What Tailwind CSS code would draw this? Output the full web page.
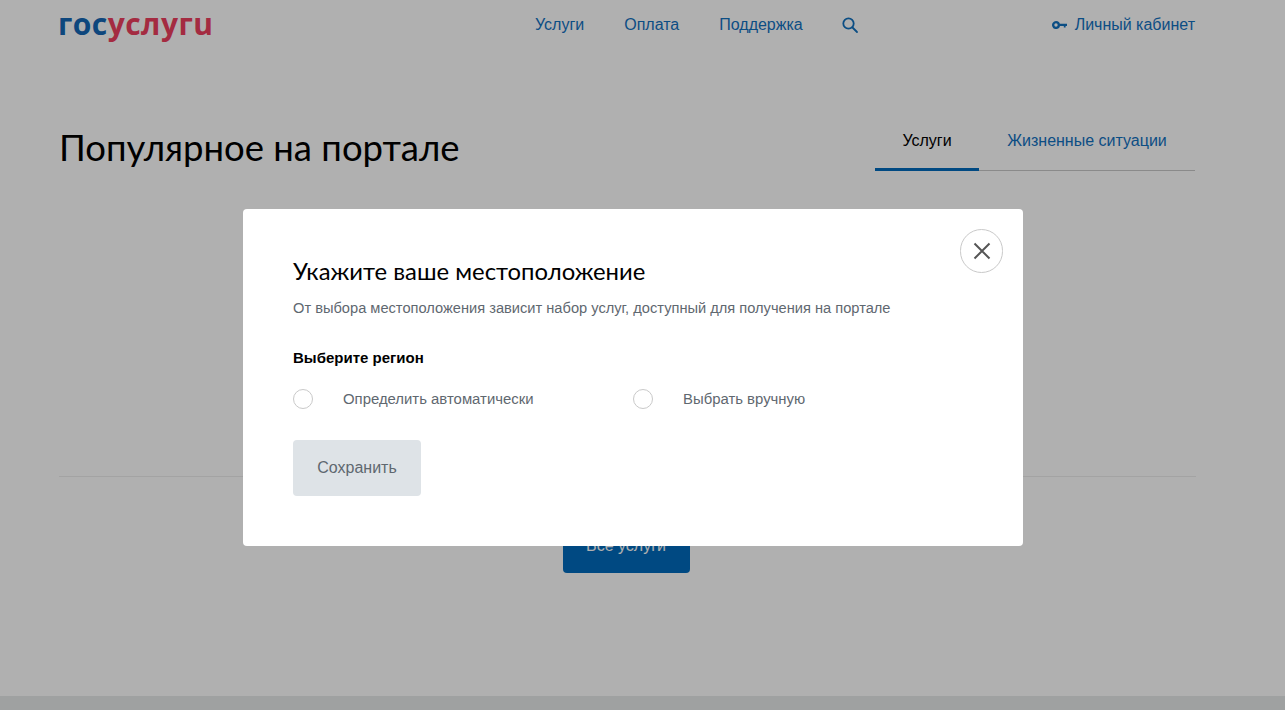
<!DOCTYPE html>
<html lang="ru">
<head>
  <meta charset="UTF-8" />
  <title>Госуслуги</title>
  <script src="https://cdn.jsdelivr.net/npm/@tailwindcss/browser@4"></script>
</head>
<body class="relative h-[710px] overflow-hidden bg-white font-['Liberation_Sans',sans-serif]">

  <!-- Шапка -->
  <header class="flex h-[50px] items-center pr-[90px] pl-[58px]">
    <a aria-label="госуслуги" class="-mt-[3px] w-[154px] font-['Open_Sans',sans-serif] text-[30px] leading-none font-bold tracking-[0.45px] whitespace-nowrap"><span class="text-[#1568b5]">гос</span><span class="text-[#ee3f5f]">услугu</span></a>
    <nav class="ml-[323px] flex items-center gap-10 text-base text-[#1271bf]">
      <a>Услуги</a>
      <a>Оплата</a>
      <a>Поддержка</a>
      <svg class="-ml-0.5 h-[18px] w-[18px]" viewBox="0 0 18 18" fill="none" stroke="currentColor" stroke-width="1.8"><circle cx="7.5" cy="7.5" r="5.2"/><path d="M11.5 11.5 16 16" stroke-linecap="round"/></svg>
    </nav>
    <a class="ml-auto flex items-center gap-2 text-base text-[#1271bf]">
      <svg class="-ml-px h-2 w-[15px]" viewBox="0 0 15 8" fill="currentColor"><path d="M4 0a4 4 0 1 1-3.8 5.2A4 4 0 0 1 4 0Zm0 2.3a1.7 1.7 0 1 0 0 3.4 1.7 1.7 0 0 0 0-3.4Z"/><path d="M7.5 2.7H15v2.2h-1.4v1.6h-1.8V4.9H7.5Z"/></svg>
      Личный кабинет
    </a>
  </header>

  <!-- Популярное -->
  <main class="pr-[90px] pl-[59px]">
    <div class="mt-[50px] flex items-start justify-between">
      <h1 class="mt-[25px] font-['Lato',sans-serif] text-[36.5px] leading-[44px] font-normal text-black">Популярное на портале</h1>
      <div class="flex h-[71px] w-[320px] border-b border-[#c8c8c8] text-base">
        <div class="flex h-[71px] w-[104px] items-start justify-center border-b-[3px] border-[#006bbd] pt-[29px] text-black">Услуги</div>
        <div class="flex flex-1 items-start justify-center pt-[29px] text-[#1271bf]">Жизненные ситуации</div>
      </div>
    </div>
    <div class="mt-[305px] -mr-px border-t border-[#ececec]"></div>
    <div class="mt-[42px] flex justify-center pr-[2px]">
      <button class="h-[54px] w-[127px] rounded bg-[#006bbd] text-base text-white">Все услуги</button>
    </div>
  </main>

  <footer class="absolute inset-x-0 bottom-0 h-[14px] bg-[#e6e9e9]"></footer>

  <!-- Затемнение -->
  <div class="absolute inset-0 bg-black/[0.31]"></div>

  <!-- Модальное окно -->
  <div class="absolute top-[209px] left-[243px] h-[337px] w-[780px] rounded bg-white pt-[47px] pl-[50px]">
    <button class="absolute top-[20px] right-[20px] flex h-11 w-[43px] items-center justify-center rounded-full border border-[#c9c9c9] text-[#555]">
      <svg class="h-[18px] w-[18px]" viewBox="0 0 18 18" fill="none" stroke="currentColor" stroke-width="2"><path d="M1.5 1.5 16.5 16.5M16.5 1.5 1.5 16.5"/></svg>
    </button>
    <h2 class="font-['Lato',sans-serif] text-[23.85px] leading-[30px] font-normal text-black">Укажите ваше местоположение</h2>
    <p class="mt-[12px] text-[14.65px] leading-[20px] text-[#5f6870]">От выбора местоположения зависит набор услуг, доступный для получения на портале</p>
    <p class="mt-[30px] text-[15px] leading-[20px] font-bold text-black">Выберите регион</p>
    <div class="mt-[21px] flex text-[14.9px] leading-[20px] text-[#5f6870]">
      <label class="flex w-[340px] items-center gap-[30px]"><span class="h-5 w-5 rounded-full border border-[#c9c9c9]"></span>Определить автоматически</label>
      <label class="flex items-center gap-[30px]"><span class="h-5 w-5 rounded-full border border-[#c9c9c9]"></span>Выбрать вручную</label>
    </div>
    <button class="mt-[31px] h-14 w-32 rounded bg-[#dee3e7] text-base text-[#5f6870]">Сохранить</button>
  </div>

</body>
</html>
